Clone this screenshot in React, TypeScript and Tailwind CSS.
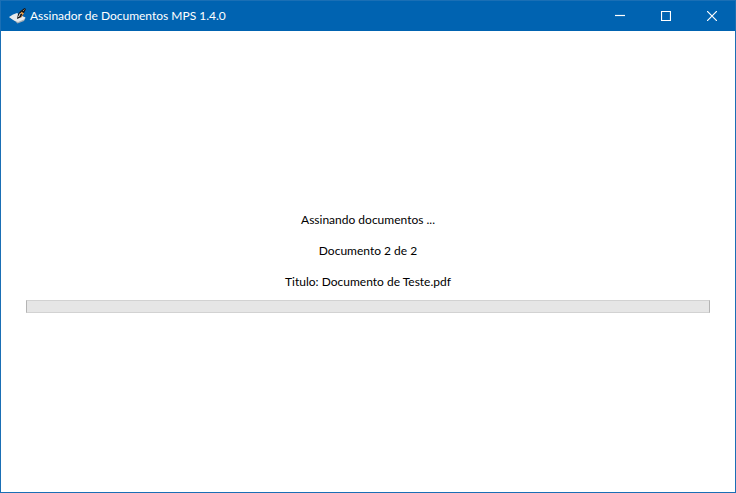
import React, { FC, ReactNode } from 'react';

const AppIcon: FC = () => (
    <svg width="18" height="16" viewBox="0 0 18 16" aria-hidden="true">
        <path d="M0 9 L6 13 L8.5 15.5 L15 13 L16.5 10 L8 12 Z" fill="#a4adb5" />
        <path d="M0 9 L4 6.5 L8 5 L12 7.5 L16.5 9.5 L15 11.5 L9 14 L5 12.5 Z" fill="#e6ebee" />
        <path d="M8 11 L9 6 L11.5 3 L15.5 0 L17 1 L14.5 6 L11.5 9.5 Z" fill="#14171b" />
        <path d="M9.5 9 L11.5 5" stroke="#e9e6df" strokeWidth="1" />
        <path d="M12 9.5 L14 5.5" stroke="#b9763a" strokeWidth="1" />
        <path d="M12 4.5 L14.5 6" stroke="#f0a54e" strokeWidth="1.8" />
        <path d="M14 3 L15.5 1.5" stroke="#a98a6a" strokeWidth="1" />
    </svg>
);

interface WindowButtonProps {
    label: string;
    children: ReactNode;
}

const WindowButton: FC<WindowButtonProps> = ({ label, children }) => (
    <button
        type="button"
        aria-label={label}
        className="flex w-[46px] items-center justify-center hover:bg-white/10"
    >
        <svg width="10" height="10" viewBox="0 0 10 10" fill="none" stroke="white" strokeWidth="1.2">
            {children}
        </svg>
    </button>
);

const TitleBar: FC = () => (
    <header className="flex h-[30px] items-stretch justify-between bg-[#0063b1] pl-2 text-white">
        <div className="flex items-center gap-[3px]">
            <AppIcon />
            <h1 className="whitespace-nowrap text-xs">Assinador de Documentos MPS 1.4.0</h1>
        </div>
        <div className="flex">
            <WindowButton label="Minimizar">
                <path d="M0 4.5h10" />
            </WindowButton>
            <WindowButton label="Maximizar">
                <path d="M0.5 0.5h9v9h-9z" />
            </WindowButton>
            <WindowButton label="Fechar">
                <path d="M0 0l10 10M10 0L0 10" />
            </WindowButton>
        </div>
    </header>
);

const App: FC = () => {
    return (
        <div className="flex min-h-screen flex-col border border-[#1a6fb5] bg-white font-['Lato','Noto_Sans',sans-serif] text-black">
            <TitleBar />
            <main className="flex flex-1 flex-col justify-center gap-2.5 px-[25px] pt-0.5 text-center text-xs">
                <div className="flex flex-col gap-[15px]">
                    <p>Assinando documentos ...</p>
                    <p>Documento 2 de 2</p>
                    <p id="document-title">Titulo: Documento de Teste.pdf</p>
                </div>
                <progress
                    value={0}
                    max={100}
                    aria-labelledby="document-title"
                    className="block h-[13px] w-full appearance-none border border-x-[#b4b4b4] border-y-[#d2d2d2] bg-[#e6e6e6] [&::-webkit-progress-bar]:bg-[#e6e6e6] [&::-webkit-progress-value]:bg-[#06b025]"
                />
            </main>
        </div>
    );
};

export default App;
